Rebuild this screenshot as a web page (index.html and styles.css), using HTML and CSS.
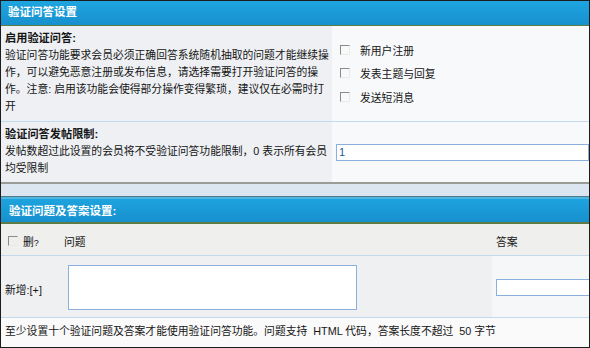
FILE: index.html
```html
<!DOCTYPE html>
<html lang="zh-CN">
<head>
    <meta charset="UTF-8">
    <title>验证问答设置</title>
    <link rel="stylesheet" href="styles.css">
</head>
<body>
    <div class="box">
        <div class="hd">验证问答设置</div>

        <div class="row r1">
            <div class="lbl">
                <b>启用验证问答:</b><br>
                验证问答功能要求会员必须正确回答系统随机抽取的问题才能继续操<br>
                作，可以避免恶意注册或发布信息，请选择需要打开验证问答的操<br>
                作。注意: 启用该功能会使得部分操作变得繁琐，建议仅在必需时打<br>
                开
            </div>
            <div class="val opts">
                <label><input type="checkbox" class="cb">新用户注册</label>
                <label><input type="checkbox" class="cb">发表主题与回复</label>
                <label><input type="checkbox" class="cb">发送短消息</label>
            </div>
        </div>

        <div class="row r2">
            <div class="lbl">
                <b>验证问答发帖限制:</b><br>
                发帖数超过此设置的会员将不受验证问答功能限制，0 表示所有会员<br>
                均受限制
            </div>
            <div class="val field">
                <input type="text" class="txt" value="1">
            </div>
        </div>

        <div class="gap"></div>

        <div class="hd hd2">验证问题及答案设置:</div>

        <div class="thead">
            <label class="del"><input type="checkbox" class="cb">删<small>?</small></label>
            <span class="col-q">问题</span>
            <span class="col-a">答案</span>
        </div>

        <div class="addrow">
            <div class="add-left">
                <span class="add-lbl">新增:[+]</span>
                <textarea class="ta"></textarea>
            </div>
            <div class="add-right">
                <input type="text" class="txt ans">
            </div>
        </div>

        <div class="note">至少设置十个验证问题及答案才能使用验证问答功能。问题支持 &nbsp;HTML 代码，答案长度不超过 &nbsp;50 字节</div>
    </div>
</body>
</html>
```

FILE: styles.css
```css
* {
    margin: 0;
    padding: 0;
    box-sizing: border-box;
}

body {
    font-family: "Liberation Sans", "Noto Sans CJK SC", sans-serif;
    font-size: 10.8px;
    color: #151515;
    background: #fff;
}

.box {
    width: 590px;
    height: 348px;
    border: 1px solid #1c1c1c;
    overflow: hidden;
    background: #f8f9fb;
}

.hd {
    height: 25px;
    line-height: 23px;
    padding-left: 7px;
    background: linear-gradient(#1ea5df, #1690ce);
    border-bottom: 1px solid #5e7b45;
    color: #fff;
    font-weight: bold;
    font-size: 11.5px;
}

.row {
    display: grid;
    grid-template-columns: 331px 1fr;
    border-bottom: 1px solid #c4d9eb;
}

.lbl {
    background: #eef0f3;
    padding: 4px 4px 0;
    line-height: 17px;
    white-space: nowrap;
    overflow: hidden;
}

.lbl b {
    font-size: 11.2px;
}

.val {
    background: #f8f9fb;
}

.r1 {
    height: 96px;
}

.r2 {
    height: 62px;
    border-bottom: 2px solid #989d97;
}

/* checkbox list */
.opts {
    padding: 12px 0 0 8px;
    display: flex;
    flex-direction: column;
}

.opts label {
    display: flex;
    align-items: center;
    height: 23.5px;
}

.cb {
    appearance: none;
    -webkit-appearance: none;
    width: 10px;
    height: 10px;
    border-top: 1px solid #8a8a8a;
    border-left: 1px solid #8a8a8a;
    border-right: 1px solid #eceae4;
    border-bottom: 1px solid #eceae4;
    background: transparent;
    margin-right: 10px;
    flex: none;
}

.field {
    display: flex;
    align-items: center;
    padding-left: 4px;
}

.txt {
    display: block;
    width: 100%;
    height: 17px;
    border: 1px solid #8cb0dc;
    background: #fff;
    font-family: "Liberation Sans", sans-serif;
    font-size: 11px;
    color: #1f5b9c;
    padding: 0 2px;
    outline: none;
}

.gap {
    height: 13px;
    background: #dce6f0;
    border-bottom: 1px solid #4f7a86;
}

.hd2 {
    height: 27px;
    line-height: 28px;
    padding-left: 8px;
    box-shadow: inset 0 2px 0 #4cb5e3;
    border-bottom: 2px solid #5e7b45;
}

.thead {
    height: 32px;
    background: #efefed;
    border-bottom: 1px solid #c4d9eb;
    display: flex;
    align-items: center;
    padding: 2px 0 0 7px;
}

.del {
    display: flex;
    align-items: center;
    width: 56px;
}

.del .cb {
    margin-right: 5px;
}

.del small {
    font-size: 9px;
    position: relative;
    top: 2px;
}

.col-q {
    width: 432px;
}

.addrow {
    height: 62px;
    display: grid;
    grid-template-columns: 491px 1fr;
    border-bottom: 1px solid #c4d9eb;
}

.add-left {
    background: #eef0f2;
    display: flex;
    align-items: center;
    padding-left: 4px;
    padding-top: 2px;
}

.add-lbl {
    width: 63px;
    padding-top: 2px;
}

.ta {
    width: 289px;
    height: 45px;
    border: 1px solid #8cb0dc;
    background: #fff;
    resize: none;
    outline: none;
}

.add-right {
    background: #f6f7f9;
    display: flex;
    align-items: center;
    padding-left: 4px;
    padding-top: 1px;
    overflow: hidden;
}

.ans {
    width: 120px;
    flex: none;
}

.note {
    height: 27px;
    line-height: 27px;
    padding-left: 4px;
    background: #fafafa;
    white-space: nowrap;
}
```
